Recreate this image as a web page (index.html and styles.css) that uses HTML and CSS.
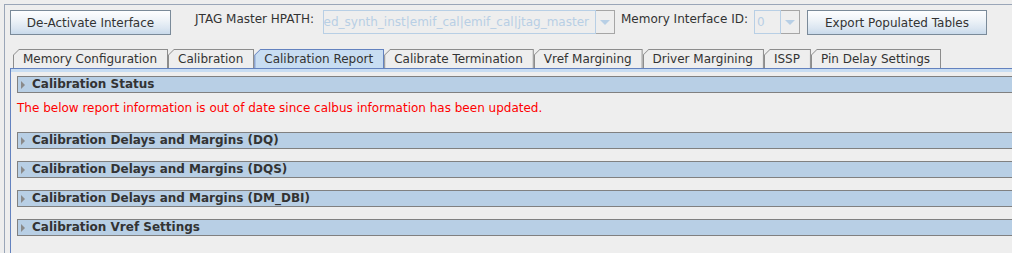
FILE: index.html
```html
<!DOCTYPE html>
<html>
<head>
<meta charset="utf-8">
<link rel="stylesheet" href="styles.css">
</head>
<body>
<div class="frame">
  <div class="toolbar">
    <button class="btn btn-deact">De-Activate Interface</button>
    <span class="label label-jtag">JTAG Master HPATH:</span>
    <div class="combo combo-path">
      <div class="combo-field"><span class="combo-text">ed_synth_inst|emif_cal|emif_cal|jtag_master</span></div>
      <div class="combo-arrow"><span class="tri-down"></span></div>
    </div>
    <span class="label label-mem">Memory Interface ID:</span>
    <div class="combo combo-id">
      <div class="combo-field"><span class="combo-text">0</span></div>
      <div class="combo-arrow"><span class="tri-down"></span></div>
    </div>
    <button class="btn btn-export">Export Populated Tables</button>
  </div>

  <div class="tabs">
    <div class="tab"><div class="tab-in">Memory Configuration</div></div>
    <div class="tab"><div class="tab-in">Calibration</div></div>
    <div class="tab selected"><div class="tab-in">Calibration Report</div></div>
    <div class="tab"><div class="tab-in">Calibrate Termination</div></div>
    <div class="tab"><div class="tab-in">Vref Margining</div></div>
    <div class="tab"><div class="tab-in">Driver Margining</div></div>
    <div class="tab"><div class="tab-in">ISSP</div></div>
    <div class="tab"><div class="tab-in">Pin Delay Settings</div></div>
  </div>

  <div class="panel">
    <div class="panel-body">
      <div class="section"><span class="arrow-right"></span><span class="section-title">Calibration Status</span></div>
      <div class="message">The below report information is out of date since calbus information has been updated.</div>
      <div class="sections">
        <div class="section"><span class="arrow-right"></span><span class="section-title">Calibration Delays and Margins (DQ)</span></div>
        <div class="section"><span class="arrow-right"></span><span class="section-title">Calibration Delays and Margins (DQS)</span></div>
        <div class="section"><span class="arrow-right"></span><span class="section-title">Calibration Delays and Margins (DM_DBI)</span></div>
        <div class="section"><span class="arrow-right"></span><span class="section-title">Calibration Vref Settings</span></div>
      </div>
    </div>
  </div>
</div>
</body>
</html>
```

FILE: styles.css
```css
html, body {
  margin: 0;
  padding: 0;
  background: #eeeeee;
  overflow: hidden;
}

body {
  width: 1012px;
  height: 253px;
  font-family: "DejaVu Sans", sans-serif;
  font-size: 12px;
  color: #333333;
}

.frame {
  margin: 4px 0 0 4px;
  width: 1008px;
  height: 249px;
  border-top: 1px solid #9aa6b8;
  border-left: 1px solid #9aa6b8;
  box-sizing: border-box;
  padding: 5px 0 0 5px;
  overflow: hidden;
}

.toolbar {
  display: flex;
  align-items: flex-start;
  height: 25px;
}

.btn {
  font-family: "DejaVu Sans", sans-serif;
  font-size: 12px;
  color: #333333;
  height: 25px;
  padding: 0;
  border: 1px solid #7a8a99;
  background: linear-gradient(#fdfeff 0%, #eef3f8 40%, #dbe6f1 75%, #c9daeb 100%);
  box-sizing: border-box;
}

.btn-deact {
  width: 161px;
}

.btn-export {
  width: 180px;
  margin-left: 7px;
}

.label {
  line-height: 16px;
  padding-top: 1px;
}

.label-jtag {
  margin-left: 24px;
  width: 128px;
}

.label-mem {
  margin-left: 6px;
  width: 133px;
}

.combo {
  display: flex;
  height: 24px;
}

.combo-path {
  width: 292px;
}

.combo-id {
  width: 46px;
}

.combo-field {
  flex: 1;
  border: 1px solid #b8cfe5;
  box-sizing: border-box;
  display: flex;
  justify-content: flex-end;
  align-items: center;
  overflow: hidden;
  padding: 0 6px 0 3px;
  color: #b8cfe5;
  white-space: nowrap;
}

.combo-id .combo-field {
  justify-content: flex-start;
  padding: 0 2px;
}

.combo-arrow {
  width: 19px;
  border: 1px solid #a6a6a6;
  border-left: none;
  box-sizing: border-box;
  display: flex;
  align-items: center;
  justify-content: center;
}

.tri-down {
  width: 0;
  height: 0;
  border-left: 5px solid transparent;
  border-right: 5px solid transparent;
  border-top: 5px solid #b8cfe5;
  margin-top: 1px;
}

.tabs {
  display: flex;
  margin: 14px 0 0 3px;
  height: 19px;
}

.tab {
  background: #8c8c8c;
  padding: 1px 1px 0 1px;
  clip-path: polygon(0 6px, 6px 0, 100% 0, 100% 100%, 0 100%);
}

.tab-in {
  height: 18px;
  line-height: 18px;
  padding: 0 10px 0 9px;
  background: #eeeeee;
  white-space: nowrap;
  clip-path: polygon(0 5px, 5px 0, 100% 0, 100% 100%, 0 100%);
}

.tab.selected {
  background: #6382bf;
  position: relative;
  z-index: 1;
}

.tab.selected .tab-in {
  background: #c8ddf2;
  height: 19px;
}

.panel {
  height: 185px;
  box-sizing: border-box;
  border-top: 1px solid #6382bf;
  border-left: 1px solid #6382bf;
}

.panel-body {
  border-top: 3px solid #c8ddf2;
  padding: 4px 0 0 6px;
}

.section {
  height: 17px;
  box-sizing: border-box;
  border-top: 1px solid #808080;
  border-bottom: 1px solid #808080;
  border-left: 1px solid #808080;
  background: #b8cfe5;
  display: flex;
  align-items: center;
}

.arrow-right {
  width: 0;
  height: 0;
  border-top: 4px solid transparent;
  border-bottom: 4px solid transparent;
  border-left: 4px solid #8a8a8a;
  margin-left: 3px;
}

.section-title {
  font-weight: bold;
  margin-left: 7px;
  line-height: 15px;
}

.message {
  color: #ff0000;
  height: 39px;
  line-height: 16px;
  padding-top: 7px;
  box-sizing: border-box;
}

.sections {
  display: flex;
  flex-direction: column;
  gap: 12px;
}
```
